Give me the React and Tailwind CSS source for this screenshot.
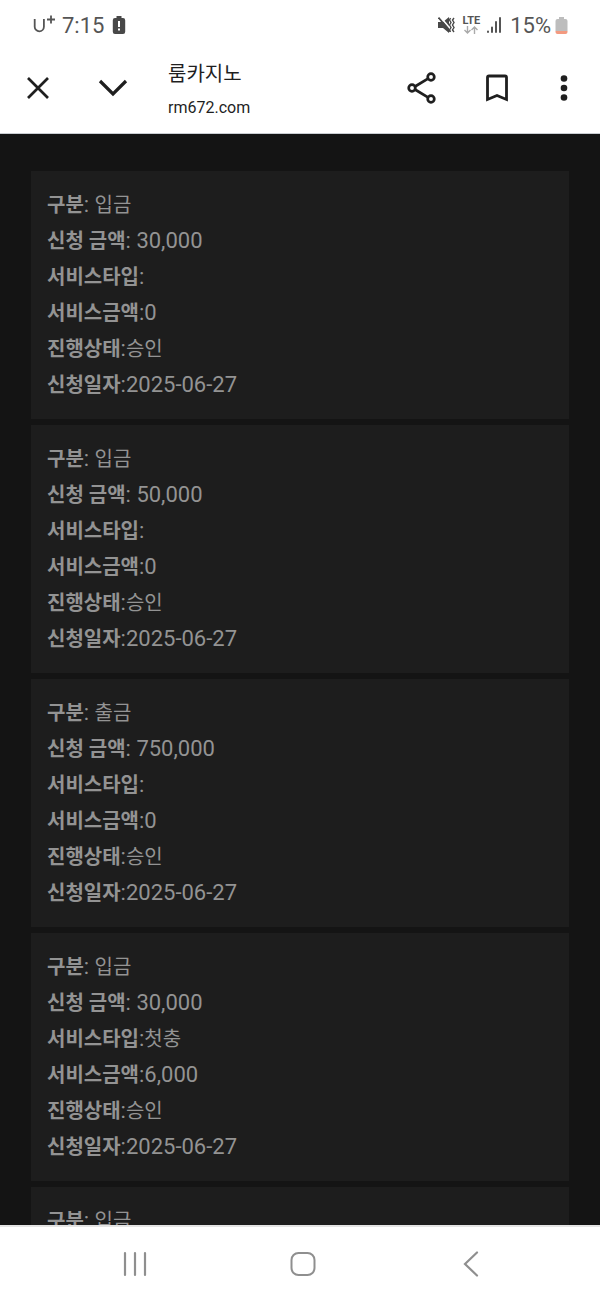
const registros = [
  { id: 1, tipo: '입금', monto: '30,000', servicio: '', bono: '0', estado: '승인', fecha: '2025-06-27' },
  { id: 2, tipo: '입금', monto: '50,000', servicio: '', bono: '0', estado: '승인', fecha: '2025-06-27' },
  { id: 3, tipo: '출금', monto: '750,000', servicio: '', bono: '0', estado: '승인', fecha: '2025-06-27' },
  { id: 4, tipo: '입금', monto: '30,000', servicio: '첫충', bono: '6,000', estado: '승인', fecha: '2025-06-27' },
  { id: 5, tipo: '입금' },
]

const btnCls = "flex h-full shrink-0 items-center justify-center text-[#1f1f1f]"
const hangulCls = "text-[20px]"

function StatusBar() {
  return (
    <div className="flex h-[50px] shrink-0 items-center justify-between px-8 text-[22px] text-[#555]">
      <div className="flex items-center">
        <svg width="24" height="20" viewBox="0 0 24 20" fill="none" stroke="currentColor" strokeWidth="1.8" role="img" aria-label="U+">
          <path d="M2.7 4v7.700a4.600 4.600 0 0 0 9.200 0V4M19 .5v8M15 4.500h8" />
        </svg>
        <span className="ml-1.5">7:15</span>
        <svg className="ml-2" width="14" height="18" viewBox="0 0 14 18">
          <path d="M4.5 0h5v2H11a2.2 2.2 0 0 1 2.2 2.2v11.6A2.2 2.2 0 0 1 11 18H3a2.2 2.2 0 0 1-2.2-2.2V4.2A2.2 2.2 0 0 1 3 2h1.500z" fill="#484848" />
          <path d="M6 5h2v6H6zM6 12.500h2v2H6z" fill="#fff" />
        </svg>
      </div>
      <div className="flex items-center">
        <svg width="18" height="18" viewBox="0 0 18 18" fill="none">
          <path d="M0 6h5l6-5v16l-6-5H0z" fill="#484848" />
          <path d="M1.500 0l12 14" stroke="#fff" strokeWidth="1.600" />
          <path d="M.5 1.500l11.500 14" stroke="#484848" strokeWidth="1.800" />
          <path d="M12.500 2l-1 2 1.500 2.500-1.500 2.500 1.500 2.500-1.500 2.500 1 2M16 2l-1.500 2 1.500 2.500-1.500 2.500 1.500 2.500-1.500 2.500 1.500 2" stroke="#484848" strokeWidth="1.400" />
        </svg>
        <div className="ml-1.5 flex flex-col items-center">
          <span className="text-[11px] font-bold leading-[10px]">LTE</span>
          <svg width="14" height="8" viewBox="0 0 14 8" fill="none" stroke="#aaa" strokeWidth="1.400">
            <path d="M3.500 0v7M.5 4l3 3 3-3M10.500 8V1M7.500 4l3-3 3 3" />
          </svg>
        </div>
        <svg className="ml-1.5" width="16" height="18" viewBox="0 0 16 18" stroke="#555" strokeWidth="2" strokeLinecap="round">
          <path d="M2 15.500v.5M6 11.500v4.500M10 6v10M14 2v14" />
        </svg>
        <span className="ml-2">15%</span>
        <svg className="ml-1" width="13" height="17" viewBox="0 0 13 17">
          <path d="M4 0h5v2h1.500A2 2 0 0 1 12.500 4v10H.5V4a2 2 0 0 1 2-2H4z" fill="#bdbdbd" />
          <path d="M.5 14h12v1a2 2 0 0 1-2 2h-8a2 2 0 0 1-2-2z" fill="#f39a80" />
        </svg>
      </div>
    </div>
  )
}

function TopBar() {
  return (
    <header className="flex h-[84px] shrink-0 items-center border-b border-[#c9cdd2] pb-[7px] pr-1.5">
      <button aria-label="닫기" className={`${btnCls} w-[75px]`}>
        <svg width="24" height="24" viewBox="0 0 24 24" fill="none" stroke="currentColor" strokeWidth="2.7">
          <path d="M2 2l20 20M22 2L2 22" />
        </svg>
      </button>
      <button aria-label="최소화" className={`${btnCls} w-[75px]`}>
        <svg width="30" height="24" viewBox="0 0 30 24" fill="none" stroke="currentColor" strokeWidth="3.2">
          <path d="M2 5l13 13L28 5" />
        </svg>
      </button>
      <div className="ml-[18px] min-w-0 flex-1 pt-1.5 text-[#1f1f1f]">
        <h1 className="text-[20px] leading-[34px]">룸카지노</h1>
        <p className="text-[16px] leading-[34px]">rm672.com</p>
      </div>
      <button aria-label="공유" className={`${btnCls} w-[75px]`}>
        <svg width="30" height="32" viewBox="0 0 30 32" fill="none" stroke="currentColor" strokeWidth="2.7">
          <circle cx="5" cy="16" r="3.3" />
          <circle cx="24" cy="5" r="3.3" />
          <circle cx="24" cy="27" r="3.3" />
          <path d="M8 14.500l13-7.800M8 17.500l13 7.800" />
        </svg>
      </button>
      <button aria-label="북마크" className={`${btnCls} w-[75px]`}>
        <svg width="24" height="28" viewBox="0 0 24 28" fill="none" stroke="currentColor" strokeWidth="2.8">
          <path d="M2.500 25.500V3.500a1.500 1.500 0 0 1 1.500-1.500h16a1.500 1.500 0 0 1 1.500 1.500v22L12 21.500z" />
        </svg>
      </button>
      <button aria-label="더보기" className={`${btnCls} w-[60px]`}>
        <svg width="8" height="26" viewBox="0 0 8 26" fill="currentColor">
          <circle cx="4" cy="3.500" r="3.300" />
          <circle cx="4" cy="13" r="3.300" />
          <circle cx="4" cy="22.500" r="3.300" />
        </svg>
      </button>
    </header>
  )
}

function Campo({ label, sep = ':', value, hangul }) {
  // los registros parciales solo muestran los campos que traen
  if (value === undefined) return null
  return (
    <p className="h-9 whitespace-pre">
      <strong className={`${hangulCls} font-bold`}>{label}</strong>
      {sep}
      <span className={hangul ? hangulCls : ''}>{value}</span>
    </p>
  )
}

function Tarjeta({ r }) {
  return (
    <li className="bg-[#1d1d1d] p-4 text-[22px] leading-9 text-[#939393]">
      <Campo label="구분" sep=": " value={r.tipo} hangul />
      <Campo label="신청 금액" sep=": " value={r.monto} />
      <Campo label="서비스타입" value={r.servicio} hangul />
      <Campo label="서비스금액" value={r.bono} />
      <Campo label="진행상태" value={r.estado} hangul />
      <Campo label="신청일자" value={r.fecha} />
    </li>
  )
}

function NavBar() {
  return (
    <nav className="grid h-[75px] shrink-0 grid-cols-3 border-t-2 border-[#e4e4e4] bg-white pl-[51px] pr-[45px] text-[#8f8f8f]">
      <button aria-label="최근 앱" className="flex items-center justify-center">
        <svg width="24" height="26" viewBox="0 0 24 26" fill="none" stroke="currentColor" strokeWidth="2.2" strokeLinecap="round">
          <path d="M2 2v22M12 2v22M22 2v22" />
        </svg>
      </button>
      <button aria-label="홈" className="flex items-center justify-center">
        <svg width="26" height="26" viewBox="0 0 26 26" fill="none" stroke="currentColor" strokeWidth="2">
          <rect x="1.500" y="2" width="23" height="22" rx="7" />
        </svg>
      </button>
      <button aria-label="뒤로" className="flex items-center justify-center">
        <svg width="16" height="26" viewBox="0 0 16 26" fill="none" stroke="currentColor" strokeWidth="2.2" strokeLinecap="round">
          <path d="M14 1.500L2 13l12 11.500" />
        </svg>
      </button>
    </nav>
  )
}

export default function App() {
  return (
    <div className="flex h-screen flex-col bg-white font-[Roboto,'Noto_Sans_CJK_KR',sans-serif]">
      <StatusBar />
      <TopBar />
      <main className="min-h-0 flex-1 overflow-hidden bg-[#141414] px-[31px] pt-[37px]">
        <ul className="flex flex-col gap-1.5">
          {registros.map(r => <Tarjeta key={r.id} r={r} />)}
        </ul>
      </main>
      <NavBar />
    </div>
  )
}
